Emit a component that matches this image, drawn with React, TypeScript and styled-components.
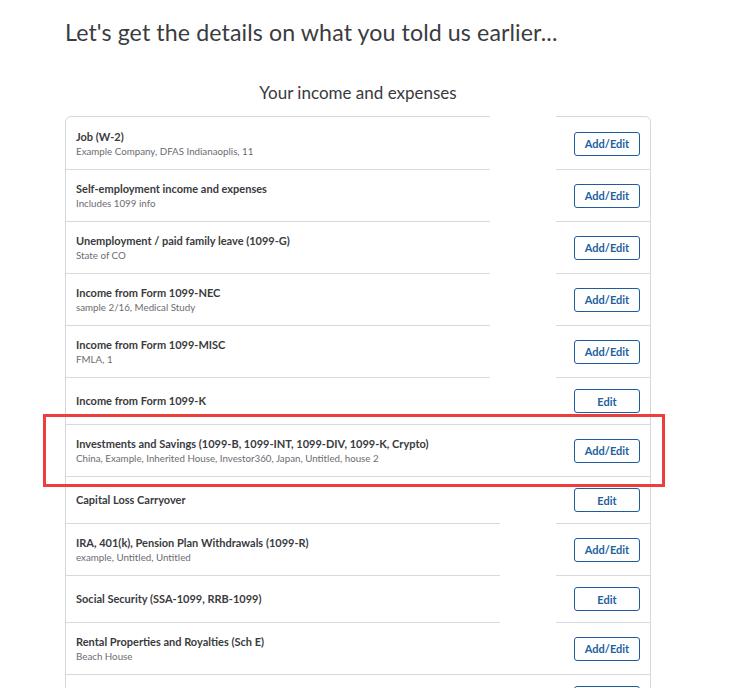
import React from "react";
import styled, { createGlobalStyle } from "styled-components";

const Global = createGlobalStyle`
  html, body { margin: 0; padding: 0; background: #ffffff; }
  body { font-family: "Lato", "Open Sans", sans-serif; color: #393a3d; }
`;

const Page = styled.main`
  padding: 17px 0 0 65px;
  width: 586px;
`;

const Heading = styled.h1`
  margin: 0;
  font-size: 23.2px;
  line-height: 30px;
  font-weight: 400;
  color: #3b3c3f;
  letter-spacing: 0.1px;
`;

const SubHeading = styled.h2`
  margin: 35px 0 0;
  text-align: center;
  font-size: 17px;
  line-height: 22px;
  font-weight: 400;
  color: #393a3d;
`;

const Card = styled.section`
  position: relative;
  margin-top: 12px;
  padding-top: 1px;
  border: 1px solid #d4d7dc;
  border-radius: 6px;
  &::before {
    content: "";
    position: absolute;
    top: -1px;
    left: 424px;
    width: 66px;
    height: 1px;
    background: #ffffff;
  }
`;

const line = "#d6dadf";

const Row = styled.div<{ $gapStart?: number; $last?: boolean }>`
  display: flex;
  align-items: center;
  justify-content: space-between;
  padding: 11px 10px 12px 10px;
  min-height: 24px;
  background: ${(p) =>
    p.$last
      ? "none"
      : p.$gapStart
      ? `linear-gradient(to right, ${line} 0 ${p.$gapStart}px, transparent ${p.$gapStart}px 490px, ${line} 490px) bottom / 100% 1px no-repeat`
      : `linear-gradient(${line}, ${line}) bottom / 100% 1px no-repeat`};
`;

const TextBlock = styled.div`
  display: flex;
  flex-direction: column;
`;

const Title = styled.div`
  font-size: 11px;
  line-height: 16px;
  font-weight: 700;
  color: #3a3b3e;
`;

const Sub = styled.div`
  font-size: 9.75px;
  line-height: 13px;
  color: #6b6c72;
`;

const Button = styled.button`
  flex: none;
  width: 66px;
  height: 24px;
  border: 1px solid #1f5c9e;
  border-radius: 3px;
  background: #ffffff;
  color: #245f9f;
  font-family: "Lato", "Open Sans", sans-serif;
  font-size: 11px;
  font-weight: 700;
  padding: 0;
  cursor: pointer;
`;

const Highlight = styled.div`
  position: absolute;
  left: -23px;
  top: 297px;
  width: 616px;
  height: 67px;
  border: 3px solid #ee3d3d;
  pointer-events: none;
`;

type Item = { title: string; sub?: string; action: string; gap?: number };

const items: Item[] = [
  { title: "Job (W-2)", sub: "Example Company, DFAS Indianaoplis, 11", action: "Add/Edit", gap: 424 },
  { title: "Self-employment income and expenses", sub: "Includes 1099 info", action: "Add/Edit", gap: 424 },
  { title: "Unemployment / paid family leave (1099-G)", sub: "State of CO", action: "Add/Edit", gap: 424 },
  { title: "Income from Form 1099-NEC", sub: "sample 2/16, Medical Study", action: "Add/Edit", gap: 424 },
  { title: "Income from Form 1099-MISC", sub: "FMLA, 1", action: "Add/Edit", gap: 424 },
  { title: "Income from Form 1099-K", action: "Edit" },
  {
    title: "Investments and Savings (1099-B, 1099-INT, 1099-DIV, 1099-K, Crypto)",
    sub: "China, Example, Inherited House, Investor360, Japan, Untitled, house 2",
    action: "Add/Edit",
  },
  { title: "Capital Loss Carryover", action: "Edit", gap: 434 },
  { title: "IRA, 401(k), Pension Plan Withdrawals (1099-R)", sub: "example, Untitled, Untitled", action: "Add/Edit", gap: 434 },
  { title: "Social Security (SSA-1099, RRB-1099)", action: "Edit", gap: 434 },
  { title: "Rental Properties and Royalties (Sch E)", sub: "Beach House", action: "Add/Edit" },
  { title: "Farm Income", action: "Add/Edit" },
  { title: "Other Common Income", sub: "Form 1099-Q, 1099-LTC, 1099-SA", action: "Add/Edit" },
];

export default function App() {
  return (
    <>
      <Global />
      <Page>
        <Heading>Let's get the details on what you told us earlier...</Heading>
        <SubHeading>Your income and expenses</SubHeading>
        <Card>
          {items.map((it, i) => (
            <Row key={it.title} $gapStart={it.gap} $last={i === items.length - 1}>
              <TextBlock>
                <Title>{it.title}</Title>
                {it.sub && <Sub>{it.sub}</Sub>}
              </TextBlock>
              <Button>{it.action}</Button>
            </Row>
          ))}
          <Highlight />
        </Card>
      </Page>
    </>
  );
}
